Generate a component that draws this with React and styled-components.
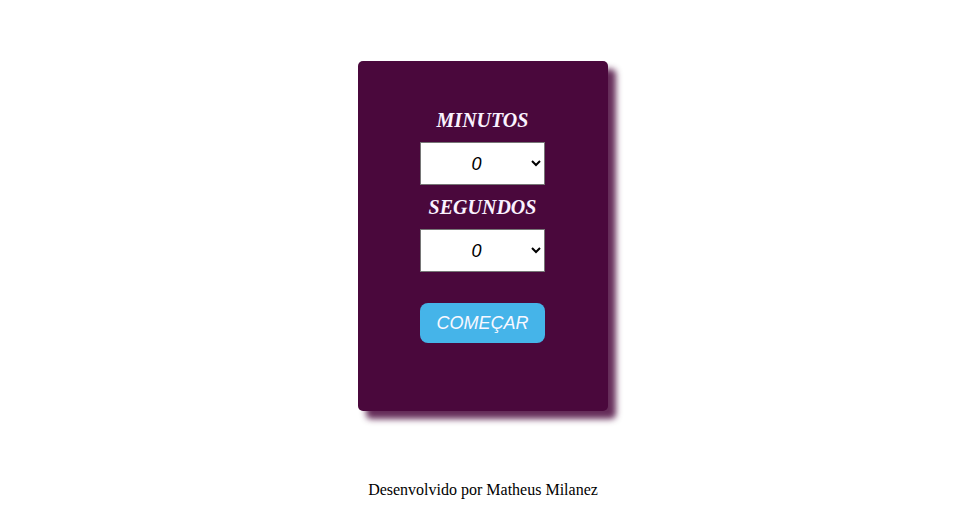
import styled, { createGlobalStyle } from 'styled-components';

const GlobalStyle = createGlobalStyle`
  body {
    margin: 0;
    background: #ffffff;
    font-family: 'Liberation Serif', 'Times New Roman', serif;
  }
`;

const Page = styled.main`
  display: flex;
  flex-direction: column;
  align-items: center;
  padding: 61px 6px 0 0;
`;

const Card = styled.section`
  width: 250px;
  height: 350px;
  box-sizing: border-box;
  padding: 48px 1px 0 0;
  background-color: #4a083c;
  border-radius: 5px;
  box-shadow: 8px 8px 6px rgba(74, 8, 60, 0.85);
  display: flex;
  flex-direction: column;
  align-items: center;
`;

const Label = styled.label`
  font-family: 'Liberation Serif', 'Times New Roman', serif;
  font-size: 20px;
  font-weight: bold;
  font-style: italic;
  line-height: 23px;
  color: #faf2ff;
  margin-bottom: 10px;
`;

const Select = styled.select`
  width: 125px;
  height: 43px;
  margin-bottom: ${(props) => (props.last ? '0' : '11px')};
  font-family: 'Liberation Sans', Arial, sans-serif;
  font-size: 18px;
  font-style: italic;
  text-align: center;
  text-align-last: center;
  background: #ffffff;
  color: #000;
  border: 1px solid #767676;
  border-radius: 0;
`;

const StartButton = styled.button`
  margin-top: 31px;
  width: 125px;
  height: 40px;
  border: none;
  border-radius: 8px;
  background-color: #45b4e9;
  color: #f8f8ff;
  font-family: 'Liberation Sans', Arial, sans-serif;
  font-size: 18px;
  font-style: italic;
  cursor: pointer;
`;

const Footer = styled.footer`
  margin-top: 70px;
  font-family: 'Liberation Serif', 'Times New Roman', serif;
  font-size: 16px;
  line-height: 18px;
  color: #000;
`;

const options = Array.from({ length: 60 }, (_, i) => i);

function App() {
  return (
    <>
      <GlobalStyle />
      <Page>
        <Card>
          <Label htmlFor="minutos">MINUTOS</Label>
          <Select id="minutos" defaultValue="0">
            {options.map((n) => (
              <option key={n} value={n}>
                {n}
              </option>
            ))}
          </Select>
          <Label htmlFor="segundos">SEGUNDOS</Label>
          <Select id="segundos" defaultValue="0" last>
            {options.map((n) => (
              <option key={n} value={n}>
                {n}
              </option>
            ))}
          </Select>
          <StartButton>COMEÇAR</StartButton>
        </Card>
        <Footer>Desenvolvido por Matheus Milanez</Footer>
      </Page>
    </>
  );
}

export default App;
